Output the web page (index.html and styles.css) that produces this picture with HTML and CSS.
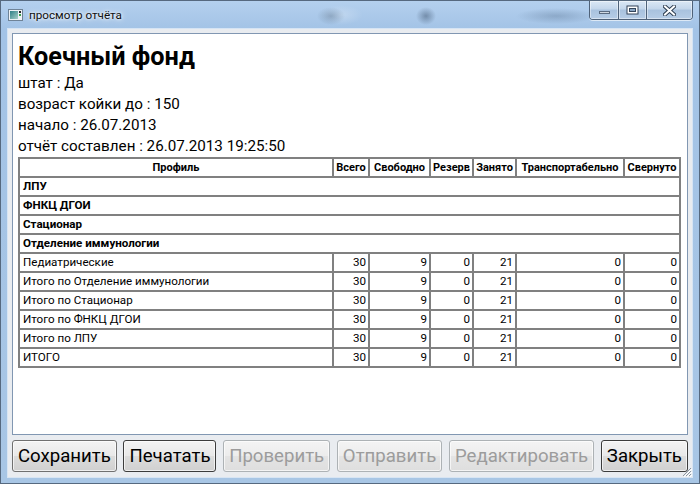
FILE: index.html
```html
<!DOCTYPE html>
<html lang="ru">
<head>
<meta charset="utf-8">
<title>просмотр отчёта</title>
<link rel="stylesheet" href="styles.css">
</head>
<body>
<div class="window">
  <div class="titlebar">
    <svg class="app-icon" width="15" height="12" viewBox="0 0 15 12">
      <defs>
        <linearGradient id="ig" x1="0" y1="0" x2="1" y2="1">
          <stop offset="0" stop-color="#2e7f86"/>
          <stop offset="1" stop-color="#a8d0c8"/>
        </linearGradient>
      </defs>
      <rect x="0.5" y="0.5" width="14" height="11" fill="#eef2f6" stroke="#6f8397"/>
      <rect x="2" y="2" width="8" height="8" fill="url(#ig)"/>
      <rect x="11" y="2" width="2" height="2" fill="#2a2a2a"/>
      <rect x="11" y="5" width="2" height="2" fill="#3aa04a"/>
    </svg>
    <span class="title">просмотр отчёта</span>
    <div class="caption">
      <div class="cbtn cbtn-min">
        <svg width="13" height="5" viewBox="0 0 13 5"><rect x="1.5" y="1.5" width="10" height="2" fill="#cfd8e2" stroke="#5a6b80"/></svg>
      </div>
      <div class="cbtn cbtn-max">
        <svg width="13" height="10" viewBox="0 0 13 10"><rect x="0.5" y="0.5" width="12" height="9" fill="#34455a"/><rect x="1.5" y="1.5" width="10" height="7" fill="#ffffff"/><rect x="3.5" y="3.5" width="6" height="3" fill="#8aa6c4" stroke="#34455a"/></svg>
      </div>
      <div class="cbtn cbtn-close">
        <svg width="13" height="11" viewBox="0 0 13 11"><path d="M2 1.5 L11 9.5 M11 1.5 L2 9.5" stroke="#2f3f52" stroke-width="4" stroke-linecap="square"/><path d="M2 1.5 L11 9.5 M11 1.5 L2 9.5" stroke="#ffffff" stroke-width="2" stroke-linecap="square"/></svg>
      </div>
    </div>
  </div>

  <div class="client">
    <div class="doc">
      <h1 class="doc-title">Коечный фонд</h1>
      <p class="doc-line">штат : Да</p>
      <p class="doc-line">возраст койки до : 150</p>
      <p class="doc-line">начало : 26.07.2013</p>
      <p class="doc-line">отчёт составлен : 26.07.2013 19:25:50</p>
      <table class="report">
        <colgroup>
          <col class="c-prof"><col class="c-all"><col class="c-free"><col class="c-res"><col class="c-busy"><col class="c-trans"><col class="c-fold">
        </colgroup>
        <thead>
          <tr><th>Профиль</th><th>Всего</th><th>Свободно</th><th>Резерв</th><th>Занято</th><th>Транспортабельно</th><th>Свернуто</th></tr>
        </thead>
        <tbody>
          <tr class="group"><td colspan="7">ЛПУ</td></tr>
          <tr class="group"><td colspan="7">ФНКЦ ДГОИ</td></tr>
          <tr class="group"><td colspan="7">Стационар</td></tr>
          <tr class="group"><td colspan="7">Отделение иммунологии</td></tr>
          <tr><td>Педиатрические</td><td class="num">30</td><td class="num">9</td><td class="num">0</td><td class="num">21</td><td class="num">0</td><td class="num">0</td></tr>
          <tr><td>Итого по Отделение иммунологии</td><td class="num">30</td><td class="num">9</td><td class="num">0</td><td class="num">21</td><td class="num">0</td><td class="num">0</td></tr>
          <tr><td>Итого по Стационар</td><td class="num">30</td><td class="num">9</td><td class="num">0</td><td class="num">21</td><td class="num">0</td><td class="num">0</td></tr>
          <tr><td>Итого по ФНКЦ ДГОИ</td><td class="num">30</td><td class="num">9</td><td class="num">0</td><td class="num">21</td><td class="num">0</td><td class="num">0</td></tr>
          <tr><td>Итого по ЛПУ</td><td class="num">30</td><td class="num">9</td><td class="num">0</td><td class="num">21</td><td class="num">0</td><td class="num">0</td></tr>
          <tr><td>ИТОГО</td><td class="num">30</td><td class="num">9</td><td class="num">0</td><td class="num">21</td><td class="num">0</td><td class="num">0</td></tr>
        </tbody>
      </table>
    </div>
    <div class="buttons">
      <button class="btn" type="button">Сохранить</button>
      <button class="btn btn-focus" type="button">Печатать</button>
      <button class="btn" type="button" disabled>Проверить</button>
      <button class="btn" type="button" disabled>Отправить</button>
      <button class="btn" type="button" disabled>Редактировать</button>
      <button class="btn btn-focus" type="button">Закрыть</button>
    </div>
  </div>
  <svg class="grip" width="10" height="10" viewBox="0 0 10 10">
    <path d="M9 1 L1 9 M9 4 L4 9 M9 7 L7 9" stroke="#8a949e" stroke-width="1"/>
    <path d="M10 2 L2 10 M10 5 L5 10 M10 8 L8 10" stroke="#ffffff" stroke-width="1"/>
  </svg>
</div>
</body>
</html>
```

FILE: styles.css
```css
* { box-sizing: border-box; }
html, body { margin: 0; padding: 0; }
body {
  width: 700px;
  height: 484px;
  overflow: hidden;
  font-family: Roboto, "Open Sans", sans-serif;
  background: #a8c6e6;
}
.window {
  position: relative;
  width: 700px;
  height: 484px;
  display: flex;
  flex-direction: column;
  border: 1px solid #56697f;
  background:
    radial-gradient(ellipse 14px 9px at 330px 15px, rgba(70,95,120,.35), transparent),
    radial-gradient(ellipse 10px 9px at 425px 15px, rgba(50,70,95,.45), transparent),
    radial-gradient(ellipse 40px 8px at 555px 15px, rgba(70,95,125,.3), transparent),
    radial-gradient(ellipse 22px 10px at 340px 14px, rgba(255,255,255,.25), transparent),
    linear-gradient(#b4d0ee 0, #a3c3e6 28px, #a8c6e5 100%);
}
.titlebar {
  height: 28px;
  display: flex;
  align-items: flex-start;
  flex: none;
}
.app-icon { margin: 8px 0 0 7px; flex: none; }
.title {
  margin: 6px 0 0 6px;
  font-size: 11.7px;
  line-height: 16px;
  color: #101010;
  text-shadow: 0 0 6px #ffffff, 0 0 3px #ffffff;
}
.caption {
  margin-left: auto;
  margin-right: 6px;
  display: flex;
  height: 19px;
  border: 1px solid #4f6279;
  border-top: none;
  border-radius: 0 0 4px 4px;
  overflow: hidden;
  box-shadow: 0 1px 0 rgba(255,255,255,.6);
}
.cbtn {
  height: 18px;
  display: flex;
  align-items: center;
  justify-content: center;
  background: linear-gradient(#dbe8f5 0, #c3d6eb 45%, #a9c2de 50%, #b6cde6 100%);
  box-shadow: inset 0 0 0 1px rgba(255,255,255,.45);
}
.cbtn + .cbtn { border-left: 1px solid #4f6279; }
.cbtn-min { width: 28px; padding-top: 5px; }
.cbtn-max { width: 28px; }
.cbtn-close { width: 46px; }

.client {
  flex: 1;
  margin: 0 7px 6px 7px;
  padding: 4px 4px 5px 4px;
  display: flex;
  flex-direction: column;
  background: #e9ecf0;
  outline: 1px solid rgba(255,255,255,.55);
}
.doc {
  flex: 1;
  border: 1px solid #8197b2;
  background: #ffffff;
  padding: 7px 5px 0 5px;
}
.doc-title {
  margin: 0;
  font-size: 25.3px;
  font-weight: 700;
  line-height: 32px;
  color: #000;
}
.doc-line {
  margin: 0;
  font-size: 15.2px;
  line-height: 21px;
  color: #000;
}
.report {
  width: 663px;
  table-layout: fixed;
  border-collapse: separate;
  border-spacing: 0;
  border: 1px solid #808080;
  font-size: 11.6px;
  color: #000;
}
.c-prof { width: 314px; }
.c-all { width: 36px; }
.c-free { width: 61px; }
.c-res { width: 43px; }
.c-busy { width: 43px; }
.c-trans { width: 108px; }
.c-fold { width: 56px; }
.report th, .report td {
  border: 1px solid #808080;
  padding: 0 2px 0 3px;
  line-height: 17px;
  white-space: nowrap;
  overflow: hidden;
}
.report th { font-size: 11px; font-weight: 700; text-align: center; padding: 0; }
.report .group td { font-weight: 700; }
.report .num { text-align: right; padding-right: 2px; }

.buttons {
  flex: none;
  margin-top: 5px;
  display: flex;
  justify-content: space-between;
}
.btn {
  height: 32px;
  padding: 0 5px;
  font-family: Roboto, "Open Sans", sans-serif;
  font-size: 18.6px;
  color: #000;
  border: 1px solid #707070;
  border-radius: 3px;
  background: linear-gradient(#f3f3f3 0, #e8e8e8 50%, #dcdcdc 51%, #d0d0d0 100%);
  box-shadow: inset 0 0 0 1px rgba(255,255,255,.65);
}
.btn-focus { border-color: #3c3c3c; }
.btn:disabled {
  color: #9c9c9c;
  border-color: #adb2b5;
  background: linear-gradient(#f4f4f4 0, #ececec 50%, #e4e4e4 51%, #dedede 100%);
}
.grip {
  position: absolute;
  right: 7px;
  bottom: 6px;
}
```
